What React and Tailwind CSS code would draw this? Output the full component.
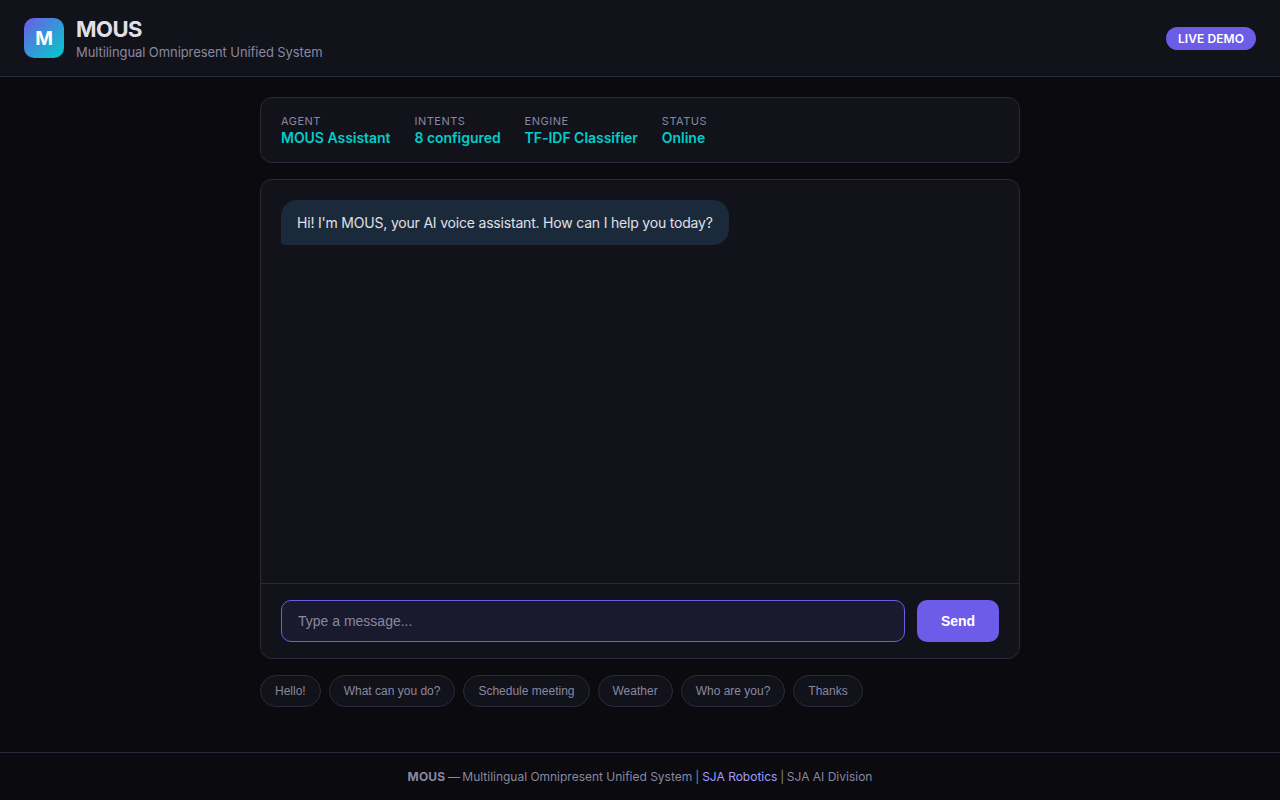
const stats = [
  ["Agent", "MOUS Assistant"],
  ["Intents", "8 configured"],
  ["Engine", "TF-IDF Classifier"],
  ["Status", "Online"],
];
const prompts = ["Hello!", "What can you do?", "Schedule meeting", "Weather", "Who are you?", "Thanks"];

export default function App() {
  return (
    <div className="flex h-screen flex-col bg-[#0a0a0f] font-['Inter',sans-serif] text-[#e0e0e8]">
      <header className="flex h-[77px] shrink-0 items-center justify-between border-b border-[#2a2a3a] bg-[#12121a] px-6">
        <div className="flex items-center gap-3">
          <div className="flex size-10 items-center justify-center rounded-[10px] bg-[linear-gradient(135deg,#6c5ce7,#00cec9)] pt-[3px] text-[19px] font-bold text-white">M</div>
          <div className="pt-1">
            <h1 className="text-[22px] leading-[25px] font-bold tracking-[-0.5px]">MOUS</h1>
            <p className="text-[13px] leading-[21px] tracking-[-0.08px] text-[#8888a0]">Multilingual Omnipresent Unified System</p>
          </div>
        </div>
        <span className="flex h-[23px] w-[90px] items-center justify-center rounded-full bg-[#6c5ce7] pt-px text-xs font-semibold tracking-[0.08px] whitespace-nowrap text-white">LIVE DEMO</span>
      </header>
      <main className="mx-auto w-[760px] grow pt-5">
        <section className="flex h-[66px] gap-6 rounded-xl border border-[#2a2a3a] bg-[#12121a] px-5 pt-4">
          {stats.map(([label, value]) => (
            <div key={label}>
              <div className="text-[11px] leading-[15px] tracking-[0.5px] text-[#8888a0] uppercase">{label}</div>
              <div className="text-sm leading-[18px] font-semibold tracking-[-0.035px] text-[#00cec9]">{value}</div>
            </div>
          ))}
        </section>
        <section className="mt-4 flex h-[480px] flex-col rounded-xl border border-[#2a2a3a] bg-[#12121a]">
          <div className="grow p-5">
            <div className="flex h-[45px] w-[448px] items-center rounded-2xl rounded-bl-[4px] bg-[#1a2a3a] px-4 text-sm tracking-[-0.195px] whitespace-nowrap">Hi! I'm MOUS, your AI voice assistant. How can I help you today?</div>
          </div>
          <div className="flex gap-3 border-t border-[#2a2a3a] px-5 py-4">
            <input className="h-[42px] min-w-0 grow rounded-[10px] border border-[#6c5ce7] bg-[#1a1a2e] px-4 font-['Liberation_Sans',sans-serif] text-sm outline-none placeholder:text-[#8888a0]" placeholder="Type a message..." />
            <button className="h-[42px] w-[82px] rounded-[10px] bg-[#6c5ce7] font-['Liberation_Sans',sans-serif] text-sm font-semibold text-white">Send</button>
          </div>
        </section>
        <div className="mt-4 flex gap-2">
          {prompts.map((prompt) => (
            <button key={prompt} className="h-8 rounded-full border border-[#2a2a3a] bg-[#12121a] px-3.5 font-['Liberation_Sans',sans-serif] text-xs text-[#8888a0]">{prompt}</button>
          ))}
        </div>
      </main>
      <footer className="flex h-12 shrink-0 items-center justify-center border-t border-[#2a2a3a] text-xs text-[#8888a0]">
        <p>
          <strong className="font-bold tracking-[0.15px]">MOUS</strong>
          <span className="tracking-[-0.55px]"> — </span>
          <span className="tracking-[-0.015px]">Multilingual Omnipresent Unified System</span>
          <span className="tracking-[-0.25px]"> | </span>
          <a className="text-[#a29bfe]">SJA Robotics</a>
          <span className="tracking-[-0.45px]"> | </span>
          SJA AI Division
        </p>
      </footer>
    </div>
  );
}
